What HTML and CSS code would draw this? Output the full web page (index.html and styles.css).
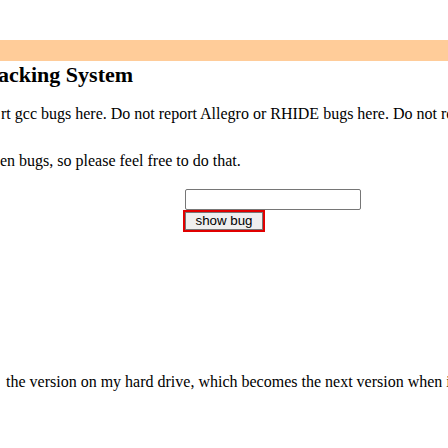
FILE: index.html
```html
<!DOCTYPE html>
<html>
<head>
<meta charset="utf-8">
<link rel="stylesheet" href="styles.css">
</head>
<body>
<div class="page">
  <div class="bar"></div>
  <h2 class="title">acking System</h2>
  <p class="line first">rt gcc bugs here. Do not report Allegro or RHIDE bugs here. Do not report</p>
  <p class="line second">en bugs, so please feel free to do that.</p>
  <form class="search">
    <input class="field" type="text">
    <button class="btn" type="button">show bug</button>
  </form>
  <p class="line last">the version on my hard drive, which becomes the next version when it is released</p>
</div>
</body>
</html>
```
FILE: styles.css
```css
html, body {
  margin: 0;
  padding: 0;
  background: #fff;
  overflow: hidden;
}
.page {
  width: 448px;
  height: 448px;
  overflow: hidden;
  font-family: "Liberation Serif", "Times New Roman", serif;
  font-size: 16px;
  color: #000;
  white-space: nowrap;
}
.bar {
  margin-top: 40px;
  height: 21px;
  background: #ffcc99;
}
.title {
  margin: 0;
  margin-left: -2px;
  font-size: 22px;
  font-weight: bold;
  line-height: 28px;
}
.line {
  margin: 0;
  line-height: 18px;
}
.first {
  margin-top: 16px;
  margin-left: 1px;
}
.second {
  margin-top: 29px;
}
.search {
  margin: 19px 0 0 183px;
  padding: 0;
}
.field {
  display: block;
  box-sizing: border-box;
  width: 176px;
  height: 21px;
  margin: 0 0 0 2px;
  border: 1px solid #767676;
  border-radius: 2px;
  padding: 0;
  background: #fff;
}
.btn {
  display: block;
  box-sizing: border-box;
  width: 82px;
  height: 22px;
  margin: 0;
  padding: 0;
  font-family: "Liberation Sans", Arial, sans-serif;
  font-size: 13.333px;
  line-height: 16px;
  color: #000;
  background: #efefef;
  border: 2px solid #e00000;
  border-radius: 0;
  outline: none;
  box-shadow: inset 0 0 0 1px #767676;
}
.last {
  margin-top: 141px;
  margin-left: 6px;
}
```
